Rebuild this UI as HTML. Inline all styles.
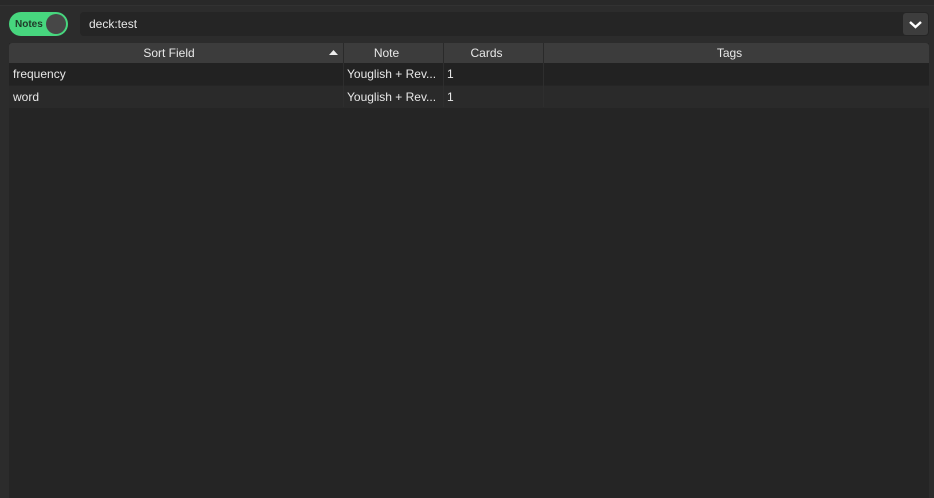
<!DOCTYPE html><html><head><style>
*{margin:0;padding:0;box-sizing:border-box}
body{width:934px;height:498px;background:#2c2c2c;font-family:"Liberation Sans",sans-serif;color:#e8e8e8;position:relative;overflow:hidden;font-size:12px}
.top{position:absolute;left:0;top:0;width:934px;height:6px;background:#292929;border-bottom:1px solid #323232}
.tog{position:absolute;left:9px;top:12px;width:59px;height:24px;border-radius:12px;background:#47d67e}
.tog span{position:absolute;left:6px;top:7px;font-size:10px;font-weight:bold;color:#1f3a28}
.tog i{position:absolute;right:2px;top:2px;width:20px;height:20px;border-radius:50%;background:#474747}
.search{position:absolute;left:80px;top:12px;width:849px;height:24px;background:#252525;border-radius:4px}
.search span{position:absolute;left:9px;top:5px;font-size:12px}
.dd{position:absolute;left:903px;top:13px;width:25px;height:22px;background:#3d3d3d;border-radius:3px}
.table{position:absolute;left:9px;top:43px;width:920px;height:455px;background:#252525}
.hd{position:absolute;top:0;height:20px;background:#3c3c3c;text-align:center;line-height:21px;font-size:12px;border-right:1px solid #2a2a2a;padding-right:14px}
.row{position:absolute;left:0;width:920px;height:22px}
.c{position:absolute;top:0;height:22px;line-height:22px;padding-left:4px;font-size:12px}
</style></head><body>
<div class="top"></div>
<div class="tog"><span>Notes</span><i></i></div>
<div class="search"><span>deck:test</span></div>
<div class="dd"><svg width="25" height="22"><path d="M7 9l5.5 5 5.5-5" stroke="#fff" stroke-width="2.4" fill="none"/></svg></div>
<div class="table">
<div class="hd" style="left:0;width:335px;border-top-left-radius:3px">Sort Field<svg style="position:absolute;right:5px;top:7px" width="9" height="6"><path d="M0 5L4.5 0 9 5z" fill="#eee"/></svg></div>
<div class="hd" style="left:335px;width:100px">Note</div>
<div class="hd" style="left:435px;width:100px">Cards</div>
<div class="hd" style="left:535px;width:385px;border-right:none;border-top-right-radius:3px">Tags</div>
<div class="row" style="top:20px;background:#222"><div class="c" style="left:0">frequency</div><div class="c" style="left:334px">Youglish + Rev...</div><div class="c" style="left:434px">1</div></div>
<div class="row" style="top:43px;background:#2a2a2a"><div class="c" style="left:0">word</div><div class="c" style="left:334px">Youglish + Rev...</div><div class="c" style="left:434px">1</div></div>
<div style="position:absolute;left:334px;top:20px;width:1px;height:44px;background:#2e2e2e"></div>
<div style="position:absolute;left:434px;top:20px;width:1px;height:44px;background:#2e2e2e"></div>
<div style="position:absolute;left:534px;top:20px;width:1px;height:44px;background:#2e2e2e"></div>
</div>
</body></html>
